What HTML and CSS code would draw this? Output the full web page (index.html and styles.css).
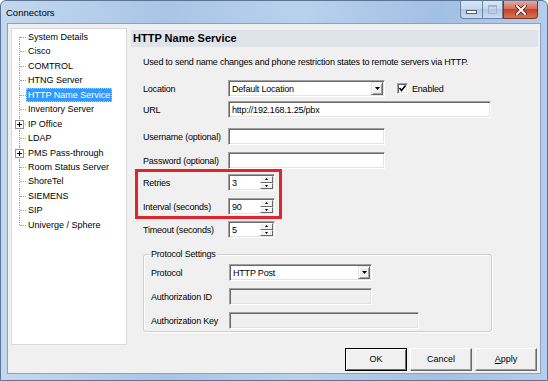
FILE: index.html
```html
<!DOCTYPE html>
<html lang="en">
<head>
  <meta charset="UTF-8" />
  <title>Connectors</title>
  <link rel="stylesheet" href="styles.css">
</head>
<body>

  <div class="window">
    <div class="titlebar">
      <span class="title">Connectors</span>
      <div class="controls">
        <span class="ctl ctl-min"><i></i></span>
        <span class="ctl ctl-max"><i></i></span>
        <span class="ctl ctl-close">
          <svg width="12" height="10" viewBox="0 0 12 10">
            <path d="M2 1 L10 9 M10 1 L2 9" stroke="#4a1a12" stroke-width="3.4" stroke-linecap="square"/>
            <path d="M2 1 L10 9 M10 1 L2 9" stroke="#fff" stroke-width="2" stroke-linecap="square"/>
          </svg>
        </span>
      </div>
    </div>

    <div class="client">
      <div class="main">
        <ul class="tree">
          <li>System Details</li>
          <li>Cisco</li>
          <li>COMTROL</li>
          <li>HTNG Server</li>
          <li><span class="selected">HTTP Name Service</span></li>
          <li>Inventory Server</li>
          <li><span class="plus"></span>IP Office</li>
          <li>LDAP</li>
          <li><span class="plus"></span>PMS Pass-through</li>
          <li>Room Status Server</li>
          <li>ShoreTel</li>
          <li>SIEMENS</li>
          <li>SIP</li>
          <li>Univerge / Sphere</li>
        </ul>

        <div class="panel">
          <div class="panel-title">HTTP Name Service</div>
          <div class="panel-body">
            <p class="desc">Used to send name changes and phone restriction states to remote servers via HTTP.</p>

            <div class="form">
              <div class="row">
                <label>Location</label>
                <div class="field select w157">
                  <span>Default Location</span>
                  <span class="drop"><svg width="5" height="3" viewBox="0 0 5 3"><path d="M0 0 H5 L2.5 3 Z" fill="#000"/></svg></span>
                </div>
                <span class="check">
                  <span class="box"><svg width="9" height="9" viewBox="0 0 9 9"><path d="M1.5 4 L3.5 6.5 L7.5 1.5" stroke="#000" stroke-width="1.6" fill="none"/></svg></span>
                  Enabled
                </span>
              </div>
              <div class="row row-url">
                <label>URL</label>
                <div class="field w263">http://192.168.1.25/pbx</div>
              </div>
              <div class="row row-user">
                <label>Username (optional)</label>
                <div class="field w157"></div>
              </div>
              <div class="row">
                <label>Password (optional)</label>
                <div class="field w157"></div>
              </div>

              <div class="highlight">
                <div class="row">
                  <label>Retries</label>
                  <div class="field spin">
                    <span>3</span>
                    <span class="arrows">
                      <span><svg width="3" height="2" viewBox="0 0 3 2"><path d="M1.5 0 L3 2 H0 Z" fill="#000"/></svg></span>
                      <span><svg width="3" height="2" viewBox="0 0 3 2"><path d="M0 0 H3 L1.5 2 Z" fill="#000"/></svg></span>
                    </span>
                  </div>
                </div>
                <div class="row">
                  <label>Interval (seconds)</label>
                  <div class="field spin">
                    <span>90</span>
                    <span class="arrows">
                      <span><svg width="3" height="2" viewBox="0 0 3 2"><path d="M1.5 0 L3 2 H0 Z" fill="#000"/></svg></span>
                      <span><svg width="3" height="2" viewBox="0 0 3 2"><path d="M0 0 H3 L1.5 2 Z" fill="#000"/></svg></span>
                    </span>
                  </div>
                </div>
              </div>

              <div class="row">
                <label>Timeout (seconds)</label>
                <div class="field spin">
                  <span>5</span>
                  <span class="arrows">
                    <span><svg width="3" height="2" viewBox="0 0 3 2"><path d="M1.5 0 L3 2 H0 Z" fill="#000"/></svg></span>
                    <span><svg width="3" height="2" viewBox="0 0 3 2"><path d="M0 0 H3 L1.5 2 Z" fill="#000"/></svg></span>
                  </span>
                </div>
              </div>

              <fieldset class="group">
                <legend>Protocol Settings</legend>
                <div class="row">
                  <label>Protocol</label>
                  <div class="field select w143">
                    <span>HTTP Post</span>
                    <span class="drop"><svg width="5" height="3" viewBox="0 0 5 3"><path d="M0 0 H5 L2.5 3 Z" fill="#000"/></svg></span>
                  </div>
                </div>
                <div class="row">
                  <label>Authorization ID</label>
                  <div class="field disabled w143"></div>
                </div>
                <div class="row">
                  <label>Authorization Key</label>
                  <div class="field disabled w190"></div>
                </div>
              </fieldset>
            </div>
          </div>
        </div>
      </div>

      <div class="actions">
        <button class="btn btn-default">OK</button>
        <button class="btn">Cancel</button>
        <button class="btn"><u>A</u>pply</button>
      </div>
    </div>
  </div>

</body>
</html>
```

FILE: styles.css
```css
body {
  margin: 0;
  padding: 0;
  font-family: 'Liberation Sans', Arial, sans-serif;
  font-size: 9px;
  color: #000;
  background-color: #fff;
}

.window {
  width: 548px;
  height: 381px;
  box-sizing: border-box;
  display: flex;
  flex-direction: column;
  padding: 0 6px 6px;
  border: 1px solid #5d7594;
  border-radius: 6px 6px 0 0;
  background: linear-gradient(to right, #c4d8ef 0%, #a9c5e6 30%, #b9d1ec 55%, #a2c0e4 80%, #b4cdea 100%);
}

/* title bar */

.titlebar {
  height: 22px;
  display: flex;
  align-items: center;
  flex-shrink: 0;
}

.title {
  margin-left: -1px;
  font-size: 9.5px;
  color: #000;
}

.controls {
  margin-left: auto;
  margin-right: 3px;
  align-self: flex-start;
  display: flex;
}

.ctl {
  height: 18px;
  box-sizing: border-box;
  display: flex;
  align-items: center;
  justify-content: center;
  border: 1px solid #6a83a4;
  border-top: none;
}

.ctl-min {
  width: 22px;
  border-radius: 0 0 0 4px;
  border-right: none;
  background: linear-gradient(#dce7f4, #c6d7ec 50%, #b2c8e3 50%, #cddcee);
}

.ctl-min i {
  width: 9px;
  height: 2px;
  margin-top: 4px;
  background-color: #fff;
  border: 1px solid #4d5f78;
}

.ctl-max {
  width: 21px;
  background: linear-gradient(#dce7f4, #c6d7ec 50%, #b2c8e3 50%, #cddcee);
}

.ctl-max i {
  width: 7px;
  height: 6px;
  border: 1px solid #9fb3cc;
  border-top-width: 2px;
}

.ctl-close {
  width: 35px;
  border-color: #7c3126;
  border-radius: 0 0 4px 0;
  background: linear-gradient(#e9a997, #d6705d 45%, #c5412a 50%, #d8744f);
}

/* client area */

.client {
  flex: 1;
  display: flex;
  flex-direction: column;
  background-color: #f0f0f0;
  border: 1px solid #8ba2bc;
  min-height: 0;
}

.main {
  flex: 1;
  display: flex;
  gap: 4px;
  padding: 4px 2px 0 3px;
  min-height: 0;
}

/* tree */

.tree {
  width: 116px;
  box-sizing: border-box;
  margin: 0;
  padding: 1px 0 0;
  list-style: none;
  background-color: #fff;
  border: 1px solid #d9d9d9;
}

.tree li {
  position: relative;
  height: 14.45px;
  line-height: 14px;
  padding-left: 16px;
  white-space: nowrap;
}

.tree li::before {
  content: '';
  position: absolute;
  left: 7px;
  top: 0;
  bottom: 0;
  border-left: 1px dotted #a0a0a0;
}

.tree li:first-child::before {
  top: 7px;
}

.tree li:last-child::before {
  bottom: auto;
  height: 7px;
}

.tree li::after {
  content: '';
  position: absolute;
  left: 8px;
  top: 7px;
  width: 6px;
  border-top: 1px dotted #a0a0a0;
}

.tree .selected {
  display: inline-block;
  margin-left: -2px;
  padding: 0 1px;
  line-height: 12px;
  background-color: #3399ff;
  color: #fff;
  border: 1px dotted #a6d0ff;
}

.plus {
  position: absolute;
  left: 3px;
  top: 3px;
  width: 9px;
  height: 9px;
  box-sizing: border-box;
  z-index: 1;
  border: 1px solid #919191;
  background:
    linear-gradient(#000, #000) center / 5px 1px no-repeat,
    linear-gradient(#000, #000) center / 1px 5px no-repeat,
    #fff;
}

/* right panel */

.panel {
  flex: 1;
  margin-top: 2px;
}

.panel-title {
  height: 17px;
  line-height: 17px;
  padding-left: 2px;
  font-size: 11px;
  font-weight: bold;
  background-color: #dfe4ea;
}

.panel-body {
  padding: 9px 0 0 12px;
  letter-spacing: -0.2px;
}

.desc {
  margin: 0;
  line-height: 12px;
}

.form {
  margin-top: 12px;
  display: flex;
  flex-direction: column;
  gap: 7px;
}

.row {
  display: flex;
  align-items: center;
  height: 17px;
}

.row-url {
  margin-top: -3px;
}

.row-user {
  margin-top: 3px;
}

.row label {
  width: 85px;
  flex-shrink: 0;
}

.field {
  height: 17px;
  box-sizing: border-box;
  display: flex;
  align-items: center;
  justify-content: space-between;
  padding-left: 3px;
  background-color: #fff;
  border: 1px solid;
  border-color: #a0a0a0 #fff #fff #a0a0a0;
  box-shadow: inset 1px 1px #696969, inset -1px -1px #e3e3e3;
}

.field.disabled {
  background-color: #f0f0f0;
}

.w143 { width: 143px; }
.w157 { width: 157px; }
.w190 { width: 190px; }
.w263 { width: 263px; }

.drop {
  width: 12px;
  height: 13px;
  box-sizing: border-box;
  margin-right: 1px;
  display: flex;
  align-items: center;
  justify-content: center;
  background-color: #f0f0f0;
  border: 1px solid;
  border-color: #e3e3e3 #696969 #696969 #e3e3e3;
  box-shadow: inset 1px 1px #fff, inset -1px -1px #a0a0a0;
}

.spin {
  width: 47px;
}

.arrows {
  width: 13px;
  height: 13px;
  margin-right: 1px;
  display: flex;
  flex-direction: column;
}

.arrows span {
  flex: 1;
  display: flex;
  align-items: center;
  justify-content: center;
  background-color: #f0f0f0;
  border: 1px solid;
  border-color: #fff #696969 #696969 #fff;
}

.check {
  margin-left: 12px;
  display: flex;
  align-items: center;
  gap: 4px;
}

.check .box {
  width: 11px;
  height: 11px;
  box-sizing: border-box;
  display: flex;
  align-items: center;
  justify-content: center;
  background-color: #fff;
  border: 1px solid;
  border-color: #a0a0a0 #fff #fff #a0a0a0;
  box-shadow: inset 1px 1px #696969, inset -1px -1px #e3e3e3;
}

.highlight {
  display: flex;
  flex-direction: column;
  gap: 7px;
  width: 147px;
  box-sizing: border-box;
  margin: -7px 0 -5px -8px;
  padding: 2px 0 1px 5px;
  border: 3px solid #e3232b;
}

.group {
  width: 349px;
  box-sizing: border-box;
  margin: 3px 0 0;
  padding: 4px 6px 2px 7px;
  display: flex;
  flex-direction: column;
  gap: 7px;
  border: 1px solid #cdcdcd;
  border-radius: 3px;
  box-shadow: 1px 1px #fff, inset 1px 1px #fff;
}

.group legend {
  padding: 0 1px;
  margin-left: -1px;
  line-height: 12px;
}

.group .row label {
  width: 78px;
}

/* bottom buttons */

.actions {
  height: 28px;
  flex-shrink: 0;
  display: flex;
  align-items: center;
  justify-content: flex-end;
  gap: 3px;
  padding-right: 3px;
}

.btn {
  width: 62px;
  height: 23px;
  padding: 0;
  font-family: inherit;
  font-size: 9px;
  color: #000;
  background-color: #f0f0f0;
  border: 1px solid;
  border-color: #fff #696969 #696969 #fff;
  box-shadow: inset -1px -1px #a0a0a0;
}

.btn-default {
  border: 1px solid #000;
  box-shadow: inset 1px 1px #fff, inset -1px -1px #696969;
}
```
